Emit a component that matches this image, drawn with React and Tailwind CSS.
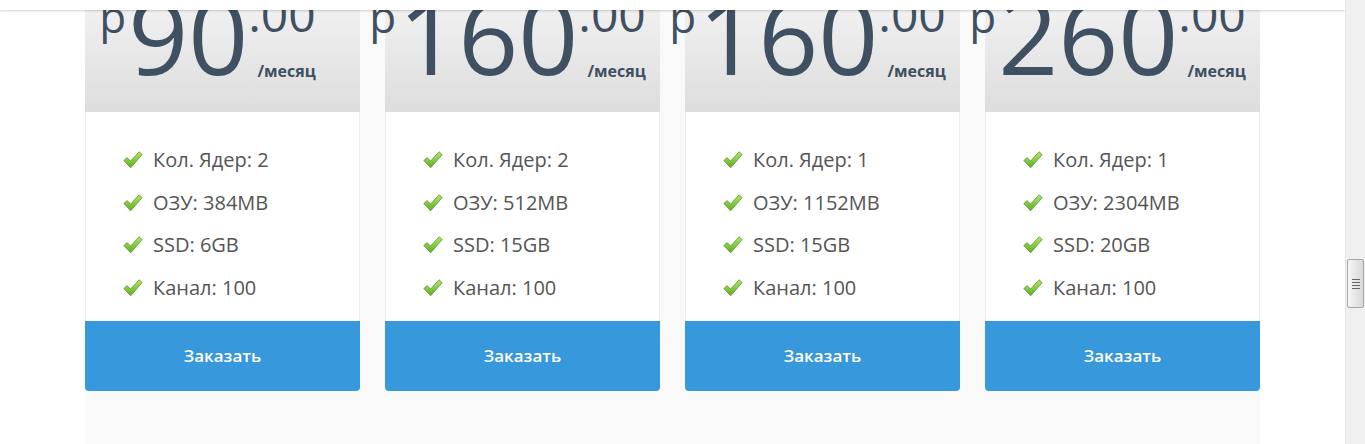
import {Fragment} from 'react';

const plans = [
  {price: '90', cores: 2, ram: '384MB', ssd: '6GB', channel: 100},
  {price: '160', cores: 2, ram: '512MB', ssd: '15GB', channel: 100},
  {price: '160', cores: 1, ram: '1152MB', ssd: '15GB', channel: 100},
  {price: '260', cores: 1, ram: '2304MB', ssd: '20GB', channel: 100},
];

function Check() {
  return (
    <svg width="20" height="18" viewBox="0 0 20 18" className="shrink-0">
      <defs>
        <linearGradient id="chk" x1="0" y1="0" x2="0" y2="1">
          <stop offset="0" stopColor="#b0e86a" />
          <stop offset="1" stopColor="#5fae22" />
        </linearGradient>
      </defs>
      <path
        d="M0.8 9.6 L4 6.6 L7.6 10 L16.1 0.8 L19.2 3.6 L7.7 16.8 Z"
        fill="url(#chk)"
        stroke="#4f8f1c"
        strokeWidth="0.7"
        strokeLinejoin="round"
      />
    </svg>
  );
}

function PlanCard({plan}) {
  const features = [
    `Кол. Ядер: ${plan.cores}`,
    `ОЗУ: ${plan.ram}`,
    `SSD: ${plan.ssd}`,
    `Канал: ${plan.channel}`,
  ];

  return (
    <div className="flex flex-col">
      {/* Price header */}
      <div className="h-[112px] bg-gradient-to-b from-[#f2f2f2] to-[#dddddd] flex justify-center">
        <div className="flex items-start mt-[-18px] pr-[30px] text-[#3e5062] whitespace-nowrap">
          <span className="text-[44px] leading-none mt-[12px]">р</span>
          <span className="text-[105px] leading-none ml-[2px]">{plan.price}</span>
          <div className="flex flex-col items-end">
            <span className="text-[48px] leading-none mt-[8px]">.00</span>
            <span className="text-[16px] leading-none font-bold mt-[25px]">/месяц</span>
          </div>
        </div>
      </div>

      {/* Features */}
      <ul className="bg-white border-x border-[#ececec] pt-[27px] pb-[12px] pl-[37px]">
        {features.map((f) => (
          <li key={f} className="h-[42.5px] flex items-center gap-[10px] text-[20px] text-[#555555]">
            <Check />
            <span>{f}</span>
          </li>
        ))}
      </ul>

      {/* Order button */}
      <button className="h-[70px] bg-[#3798db] rounded-b-[4px] text-white text-[17px] font-semibold">
        Заказать
      </button>
    </div>
  );
}

export default function App() {
  return (
    <div className="flex h-[444px] w-[1365px] overflow-hidden bg-white font-['Open_Sans',sans-serif]">
      <div className="relative flex-1 overflow-hidden">
        {/* Sticky top bar */}
        <div className="absolute top-0 left-0 right-0 h-[10px] bg-white shadow-[0_1px_2px_rgba(0,0,0,0.18)] z-10" />

        <div className="ml-[85px] w-[1175px] h-full bg-[#f9f9f9] grid grid-cols-4 gap-[25px] content-start">
          {plans.map((p, i) => (
            <Fragment key={i}>
              <PlanCard plan={p} />
            </Fragment>
          ))}
        </div>
      </div>

      {/* Scrollbar */}
      <div className="w-[20px] bg-[#f0f0f0] border-l border-[#e6e6e6] flex flex-col">
        <div className="h-[259px]" />
        <div className="h-[49px] mx-[1px] rounded-[2px] border border-[#a9a9a9] bg-gradient-to-r from-[#f6f6f6] to-[#d8d8d8] flex flex-col items-center justify-center gap-[2px]">
          <div className="w-[8px] h-[1px] bg-[#666]" />
          <div className="w-[8px] h-[1px] bg-[#666]" />
          <div className="w-[8px] h-[1px] bg-[#666]" />
          <div className="w-[8px] h-[1px] bg-[#666]" />
        </div>
      </div>
    </div>
  );
}
